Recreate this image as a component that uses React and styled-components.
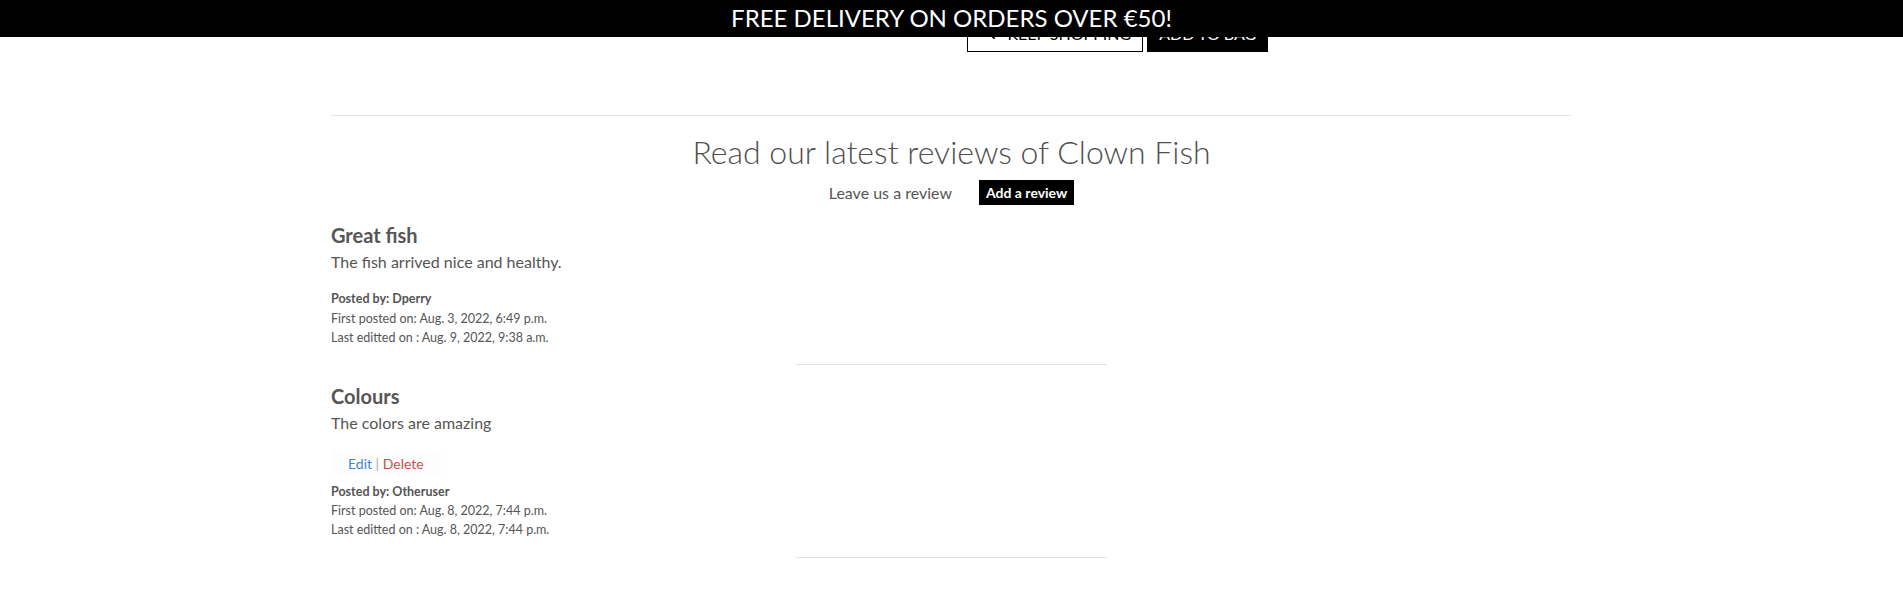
import React from 'react'
import styled, { createGlobalStyle } from 'styled-components'
import { FaChevronLeft } from 'react-icons/fa'

const GlobalStyle = createGlobalStyle`
  body {
    margin: 0;
    background: #fff;
    color: #555;
    font-family: Lato, "Liberation Sans", sans-serif;
  }
  * { box-sizing: border-box; }
`

const Banner = styled.div`
  position: fixed;
  top: 0;
  left: 0;
  right: 0;
  z-index: 10;
  height: 37px;
  padding-bottom: 2px;
  background: #000;
  color: #fff;
  font-size: 24px;
  line-height: 35px;
  text-align: center;
`

const Page = styled.main`
  width: 1241px;
  margin: 0 auto;
  padding-top: 8px;
`

const ProductRow = styled.div`
  display: grid;
  grid-template-columns: 1fr 1fr;
  column-gap: 30px;
`

const ButtonGroup = styled.div`
  display: flex;
  gap: 4px;
  grid-column: 2;
`

const ShopButton = styled.button`
  display: inline-flex;
  align-items: center;
  padding: 13px 11px 5px;
  border: 1px solid #000;
  border-radius: 0;
  background: ${p => (p.$dark ? '#000' : '#fff')};
  color: ${p => (p.$dark ? '#fff' : '#000')};
  font-family: inherit;
  font-size: 16px;
  line-height: 24px;
  text-transform: uppercase;
  svg {
    margin: 0 10px 0 7px;
  }
`

const Divider = styled.hr`
  margin: 63px 0 0;
  border: 0;
  border-top: 1px solid #e6e6e6;
`

const Title = styled.h2`
  margin: 17px 0 9px;
  color: #4f4f4f;
  font-size: 32px;
  font-weight: 300;
  line-height: 1.2;
  text-align: center;
`

const CtaRow = styled.div`
  display: flex;
  justify-content: center;
  align-items: center;
  gap: 27px;
  height: 25px;
  font-size: 16px;
  line-height: 24px;
`

const SmallButton = styled.button`
  padding: 3px 7px;
  border: 0;
  border-radius: 0;
  background: #000;
  color: #fff;
  font-family: inherit;
  font-size: 14px;
  font-weight: 700;
  line-height: 19px;
`

const ReviewList = styled.section`
  margin-top: 18px;
`

const ReviewTitle = styled.h5`
  margin: 0 0 3px;
  font-size: 20px;
  font-weight: 700;
  line-height: 24px;
`

const ReviewBody = styled.p`
  margin: 0 0 15px;
  font-size: 16px;
  line-height: 24px;
`

const Controls = styled.div`
  display: inline-block;
  margin-bottom: 5px;
  padding: 3px 17px;
  background: #fdfdfd;
  font-size: 14px;
  line-height: 21px;
`

const ControlLink = styled.a`
  color: ${p => (p.$danger ? '#d9474f' : '#3b86d6')};
  text-decoration: none;
`

const Pipe = styled.span`
  color: #aaa;
`

const Meta = styled.div`
  font-size: 12.5px;
  line-height: 19.2px;
`

const Author = styled.div`
  font-weight: 700;
`

const ReviewRule = styled.hr`
  width: 25%;
  margin: 17px auto 19px;
  border: 0;
  border-top: 1px solid #e3e3e3;
`

const reviews = [
  {
    id: 1,
    title: 'Great fish',
    body: 'The fish arrived nice and healthy.',
    author: 'Dperry',
    posted: 'Aug. 3, 2022, 6:49 p.m.',
    edited: 'Aug. 9, 2022, 9:38 a.m.',
    own: false,
  },
  {
    id: 2,
    title: 'Colours',
    body: 'The colors are amazing',
    author: 'Otheruser',
    posted: 'Aug. 8, 2022, 7:44 p.m.',
    edited: 'Aug. 8, 2022, 7:44 p.m.',
    own: true,
  },
]

const App = () => {
  return (
    <>
      <GlobalStyle />
      <Banner>FREE DELIVERY ON ORDERS OVER €50!</Banner>
      <Page>
        <ProductRow>
          <ButtonGroup>
            <ShopButton>
              <FaChevronLeft size={12} />
              Keep Shopping
            </ShopButton>
            <ShopButton $dark>Add to bag</ShopButton>
          </ButtonGroup>
        </ProductRow>
        <Divider />
        <Title>Read our latest reviews of Clown Fish</Title>
        <CtaRow>
          <span>Leave us a review</span>
          <SmallButton>Add a review</SmallButton>
        </CtaRow>
        <ReviewList>
          {reviews.map(r => (
            <article key={r.id}>
              <ReviewTitle>{r.title}</ReviewTitle>
              <ReviewBody>{r.body}</ReviewBody>
              {r.own && (
                <Controls>
                  <ControlLink href="#">Edit</ControlLink> <Pipe>|</Pipe>{' '}
                  <ControlLink href="#" $danger>
                    Delete
                  </ControlLink>
                </Controls>
              )}
              <Meta>
                <Author>Posted by: {r.author}</Author>
                <div>First posted on: {r.posted}</div>
                <div>Last editted on : {r.edited}</div>
              </Meta>
              <ReviewRule />
            </article>
          ))}
        </ReviewList>
      </Page>
    </>
  )
}

export default App
